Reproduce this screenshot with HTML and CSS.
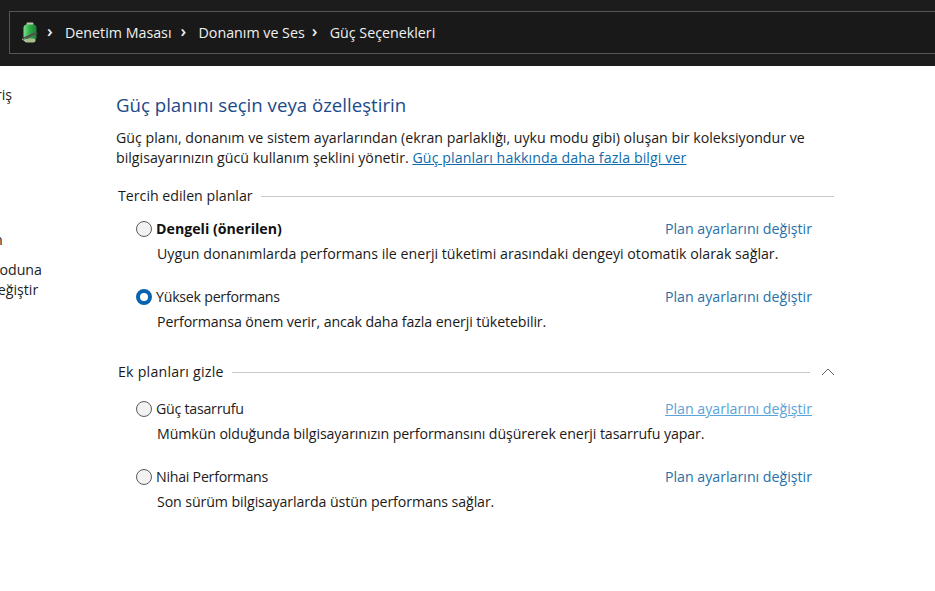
FILE: index.html
```html
<!DOCTYPE html>
<html lang="tr">
<head>
<meta charset="utf-8">
<title>Güç Seçenekleri</title>
<link rel="stylesheet" href="styles.css">
</head>
<body>
<header class="topbar">
  <nav class="address">
    <svg class="battery" width="18" height="22" viewBox="0 0 18 22">
      <defs>
        <linearGradient id="cell" x1="0" y1="0" x2="1" y2="0">
          <stop offset="0" stop-color="#7ee08c"/>
          <stop offset="0.45" stop-color="#2fb04a"/>
          <stop offset="1" stop-color="#1c7f35"/>
        </linearGradient>
      </defs>
      <rect x="5.5" y="0.5" width="7" height="3" rx="1.2" fill="#b9cbb0"/>
      <rect x="2.5" y="2.5" width="13" height="16" rx="3.5" fill="url(#cell)"/>
      <rect x="3.5" y="16.5" width="11" height="4" rx="2" fill="#a9bd8e"/>
      <path d="M1 16 L13 10.5 L17 11 L6 17 Z" fill="#50544a"/>
      <path d="M1 17 L5 19.5" stroke="#c5c9b8" stroke-width="1"/>
    </svg>
    <span class="sep">›</span><span class="crumb">Denetim Masası</span>
    <span class="sep">›</span><span class="crumb crumb-mid">Donanım ve Ses</span>
    <span class="sep">›</span><span class="crumb">Güç Seçenekleri</span>
  </nav>
</header>
<div class="page">
  <aside class="sidebar">
    <a class="side-a">Giriş</a>
    <a class="side-b">Ekran</a>
    <a class="side-c">Uyku moduna<br>geçişi değiştir</a>
  </aside>
  <main class="content">
    <h1 class="title">Güç planını seçin veya özelleştirin</h1>
    <p class="intro">Güç planı, donanım ve sistem ayarlarından (ekran parlaklığı, uyku modu gibi) oluşan bir koleksiyondur ve bilgisayarınızın gücü kullanım şeklini yönetir. <a class="intro-link">Güç planları hakkında daha fazla bilgi ver</a></p>

    <div class="group-head first"><span>Tercih edilen planlar</span><i class="rule"></i></div>
    <section class="plan">
      <div class="plan-top"><span class="radio"></span><b class="name bold">Dengeli (önerilen)</b><a class="change">Plan ayarlarını değiştir</a></div>
      <p class="desc">Uygun donanımlarda performans ile enerji tüketimi arasındaki dengeyi otomatik olarak sağlar.</p>
    </section>
    <section class="plan">
      <div class="plan-top"><span class="radio on"></span><span class="name">Yüksek performans</span><a class="change">Plan ayarlarını değiştir</a></div>
      <p class="desc tight">Performansa önem verir, ancak daha fazla enerji tüketebilir.</p>
    </section>

    <div class="group-head second"><span>Ek planları gizle</span><i class="rule"></i>
      <svg class="chev" width="14" height="8" viewBox="0 0 14 8"><path d="M1 7 L7 1 L13 7" fill="none" stroke="#666" stroke-width="1"/></svg>
    </div>
    <section class="plan">
      <div class="plan-top"><span class="radio"></span><span class="name">Güç tasarrufu</span><a class="change hover">Plan ayarlarını değiştir</a></div>
      <p class="desc tight">Mümkün olduğunda bilgisayarınızın performansını düşürerek enerji tasarrufu yapar.</p>
    </section>
    <section class="plan">
      <div class="plan-top"><span class="radio"></span><span class="name">Nihai Performans</span><a class="change">Plan ayarlarını değiştir</a></div>
      <p class="desc tight">Son sürüm bilgisayarlarda üstün performans sağlar.</p>
    </section>
  </main>
</div>
</body>
</html>
```
FILE: styles.css
```css
* { box-sizing: border-box; }
html, body { margin: 0; padding: 0; }
body {
  width: 935px;
  height: 591px;
  overflow: hidden;
  background: #fff;
  color: #1a1a1a;
  font-family: "Open Sans", "Noto Sans", sans-serif;
  font-size: 14.2px;
  line-height: 20px;
}
.topbar {
  height: 66px;
  background: #1c1c1c;
  padding: 11px 0 12px 9px;
}
.address {
  height: 43px;
  display: flex;
  align-items: center;
  background: #191919;
  border: solid #555;
  border-width: 1px 0 1px 1px;
  padding-left: 11px;
  color: #f0f0f0;
  font-size: 14.25px;
}
.battery { flex: none; margin-right: 8px; }
.sep { font-size: 17px; font-weight: 600; width: 8px; margin-right: 10px; line-height: 20px; margin-top: -3px; }
.crumb { margin-right: 9px; }
.crumb-mid { margin-right: 7px; }
.page { display: flex; }
.sidebar {
  width: 116px;
  flex: none;
  overflow: hidden;
  height: 525px;
  position: relative;
  color: #222;
}
.sidebar a { display: block; white-space: nowrap; }
.side-a { margin: 19px 0 0 -18px; }
.side-b { margin: 125px 0 0 -35px; }
.side-c { margin: 10px 0 0 -51px; }
.content { width: 740px; padding-top: 26px; }
.title {
  margin: 0;
  font-weight: 400;
  font-size: 18.65px;
  line-height: 25px;
  color: #1a4a8a;
}
.intro { margin: 11px 0 0; width: 710px; }
.intro-link { color: #0f6cab; text-decoration: underline; letter-spacing: 0.1px; }
.group-head { display: flex; align-items: center; width: 718px; padding-left: 2px; }
.group-head.first { margin-top: 18px; }
.group-head.second { margin-top: 30px; letter-spacing: 0.22px; }
.group-head .rule { flex: 1; height: 1px; background: #c8c8c8; margin-left: 8px; }
.chev { flex: none; margin: 0 -1px 0 11px; }
.plan { padding-left: 20px; width: 696px; }
.group-head + .plan { margin-top: 13px; }
.group-head.second + .plan { margin-top: 17px; }
.plan + .plan { margin-top: 23px; }
.plan-top { display: flex; align-items: center; height: 20px; }
.radio {
  width: 16px;
  height: 16px;
  border-radius: 50%;
  border: 1px solid #5a5a5a;
  background: #f2f2f2;
  margin-right: 4px;
  flex: none;
}
.radio.on { border: 4.5px solid #0a63b0; background: #fff; }
.name { color: #222; letter-spacing: -0.25px; }
.name.bold { font-weight: 700; color: #111; letter-spacing: 0; }
.change { margin-left: auto; color: #2a70a8; }
.change.hover { color: #5ba3d9; text-decoration: underline; }
.desc { margin: 5px 0 0 21px; }
.desc.tight { letter-spacing: -0.1px; }
```
